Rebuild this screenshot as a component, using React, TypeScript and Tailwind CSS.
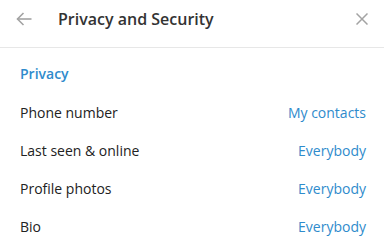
import React from "react"

const rows = [
  { label: "Phone number", value: "My contacts" },
  { label: "Last seen & online", value: "Everybody" },
  { label: "Profile photos", value: "Everybody" },
  { label: "Bio", value: "Everybody" },
]

export default function App() {
  return (
    <div className="w-[384px] h-[251px] bg-white overflow-hidden" style={{ fontFamily: '"Open Sans", sans-serif' }}>
      <div className="flex h-[48px] items-center border-b border-[#e7e7e7] pb-[9px]">
        <div className="flex w-[58px] justify-start pl-[16px]">
          <svg width="16" height="14" viewBox="0 0 16 14" fill="none" stroke="#a3a3a3" strokeWidth="1.6">
            <path d="M15.5 7H1.5" />
            <path d="M7.5 1L1.5 7l6 6" />
          </svg>
        </div>
        <div className="flex-1 text-[16px] leading-6 font-semibold text-[#333333]">Privacy and Security</div>
        <div className="pr-[16px]">
          <svg width="12" height="12" viewBox="0 0 12 12" fill="none" stroke="#a3a3a3" strokeWidth="1.5">
            <path d="M0.5 0.5l11 11M11.5 0.5l-11 11" />
          </svg>
        </div>
      </div>
      <div className="pt-[16px]">
        <div className="px-[20px] text-[14px] leading-5 font-semibold text-[#2f8bcc]">Privacy</div>
        <div className="mt-[10px]">
          {rows.map((r) => (
            <div key={r.label} className="flex h-[38px] items-center justify-between px-[18px] pl-[20px] text-[14px] leading-5">
              <span className="text-[#222222]">{r.label}</span>
              <span className="text-[#2f8bcc]">{r.value}</span>
            </div>
          ))}
        </div>
      </div>
    </div>
  )
}
